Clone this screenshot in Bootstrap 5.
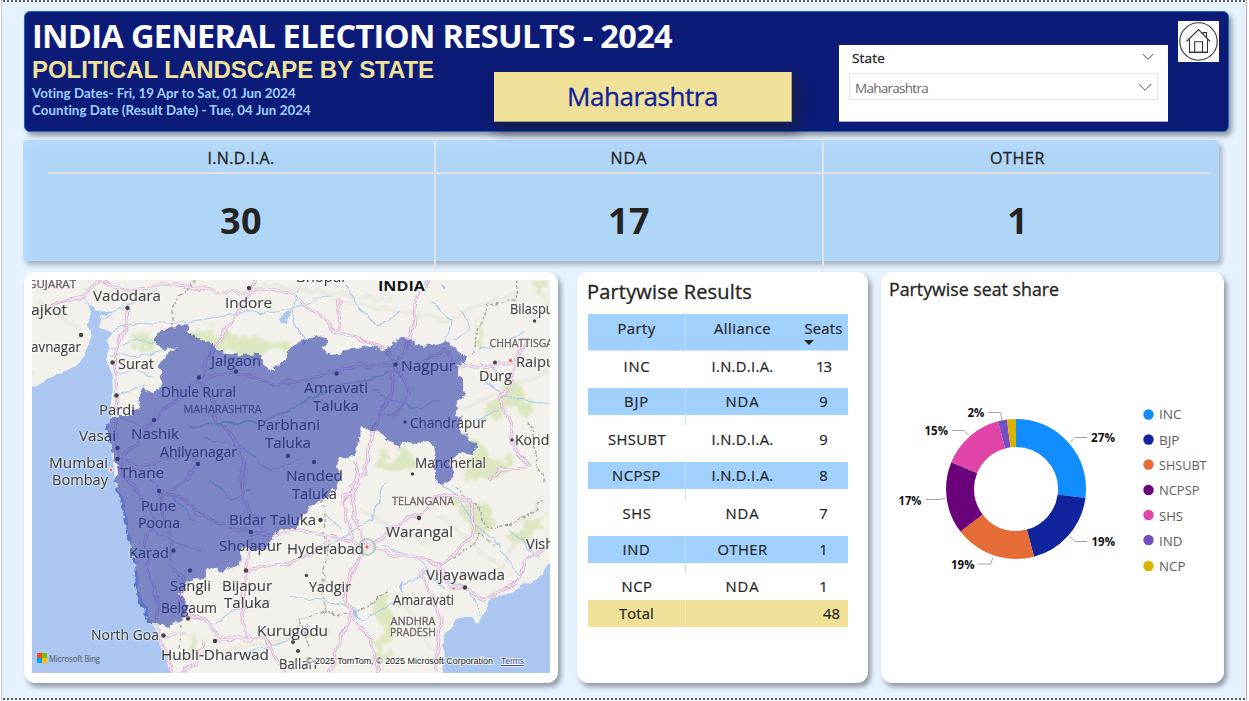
<!DOCTYPE html>
<html lang="en">
<head>
<meta charset="utf-8">
<meta name="viewport" content="width=device-width, initial-scale=1">
<title>India General Election Results - 2024</title>
<link href="https://cdn.jsdelivr.net/npm/bootstrap@5.3.0/dist/css/bootstrap.min.css" rel="stylesheet">
<style>
  body { width:1249px; height:701px; overflow:hidden; background:#fff; color:#252423; font-family:"Open Sans","Noto Sans",sans-serif; }
  .report { width:1246px; height:700px; margin-left:1px; padding:9px 0 0 22px; background:#e6f2ff; border-left:1px solid #ccc; border-right:1px solid #b5b5b5; }
  .dots { left:2px; width:1245px; height:2px; background:repeating-linear-gradient(90deg,#fff0 0 1px,#605e5c 1px 3px,#fff0 3px 4px); }
  .dots-end { top:698px; }
  [data-w] { white-space:nowrap; }
  .banner { width:1205px; height:121px; margin-top:2px; background:#0d1b78; border:1px solid #1767bd; border-radius:6px; box-shadow:3px 4px 5px #0000005c; }
  .headline { width:462px; padding-left:7px; padding-top:3px; }
  .headline h1 { font-size:32.5px; line-height:42px; font-weight:700; color:#fff; margin:0; }
  .headline h2 { font:700 24px/25px "Liberation Sans",Arial,sans-serif; color:#f0e199; margin:0; }
  .headline p { font:700 13.3px/17px Lato,sans-serif; color:#a0d1ff; margin:0; }
  .headline .first { padding-top:3px; }
  .state-name { width:298px; height:50px; margin:60px 0 0 7px; background:#f0e199; color:#12239e; font-size:26px; -webkit-text-stroke:.35px; box-shadow:3px 4px 12px 4px #15205890, 6px 7px 12px #22222270; border-right:1px solid #a9a27b; border-bottom:1px solid #a9a27b; padding-bottom:1px; }
  .slicer { width:329px; height:77px; margin:33px 0 0 47px; background:#fff; padding:0 10px; border-bottom:1px solid #aab; }
  .slicer .caption-row { height:28px; padding:0 3px; font-size:13.5px; -webkit-text-stroke:.3px; }
  .slicer .caption-row span { padding-bottom:2px; }
  .slicer .caption-row svg { margin:0 1px 4px 0; }
  .slicer .choice { height:27px; border:1px solid #e6e6e6; padding:3px 5px 0; font-size:13.5px; color:#666; width:309px; }
  .slicer .choice svg { margin-bottom:2px; }
  .home-link { width:41px; height:41px; margin:9px 0 0 10px; background:#fff; }
  .kpis { width:1196px; height:121px; margin:8px 0 0 -1px; padding-left:24px; border-radius:4px; background:#afd5f7; box-shadow:inset 5px 5px 8px #b9dcff, 3px 4px 5px #00000045; }
  .kpi { width:388px; height:128px; margin-top:1px; border-right:2px solid #e3e3e3; }
  .kpi:last-child { border-right:0; width:387px; }
  .kpi-first { width:389px; padding-left:1px; }
  .kpi-name { height:33px; border-bottom:2px solid #e3e3e3; font-size:16px; line-height:34px; -webkit-text-stroke:.3px; }
  .kpi-value { font-size:36px; line-height:48px; font-weight:700; margin-top:23px; }
  .panel { height:411px; background:#fff; border-radius:11px; box-shadow:3px 4px 5px #0000005c; }
  .lower { margin-top:11px; }
  .map-panel { width:534px; padding:8px; }
  .table-panel { width:291px; margin-left:19px; padding:6px 0 0 11px; }
  .share-panel { width:343px; margin-left:13px; padding:4px 0 0 8px; }
  .results { width:260px; table-layout:fixed; border-collapse:separate; border-spacing:0; font-size:14.8px; margin-top:9px; text-align:center; -webkit-text-stroke:.2px; }
  .results th, .results td { padding:0; vertical-align:top; font-weight:400; height:37px; line-height:28px; }
  .results th { background:#a0d1ff; line-height:29px; border-bottom:1px solid #cfe6fd; }
  .results .top-row td { line-height:30px; }
  .results th:first-child, .results .band td:first-child { border-right:1px solid #c3e0fc; }
  .results .band td { line-height:27px; background:linear-gradient(#a0d1ff 27px,#fff 27px); }
  .results .last td { height:27px; line-height:27px; }
  .results .sum td { height:27px; line-height:27px; background:#f0e199; }
  .results .sum td:first-child { border-right:1px solid #f5eab8; }
  .sort-arrow { display:block; width:0; border:5px solid transparent; border-top-color:#252423; border-bottom:0; margin:-3px 0 0 5px; }
  .panel h3 { font-weight:400; margin:0; -webkit-text-stroke:.3px; }
  .table-panel h3 { font-size:20px; line-height:27px; margin-left:-1px; }
  .share-panel h3 { font-size:17.8px; line-height:27px; }
  svg text { font-family:"Open Sans","Noto Sans",sans-serif; }
  .city { font-size:15.2px; fill:#404040; stroke:#404040; stroke-width:.15px; filter:drop-shadow(0 0 .7px #fff) drop-shadow(0 0 1px #fff); }
  .region { font-size:10.5px; fill:#6d6161; stroke:#6d6161; stroke-width:.3px; filter:drop-shadow(0 0 1px #fff); }
  .pct { font-size:12px; font-weight:700; fill:#111; }
  .key { font-size:12.5px; fill:#605e5c; }
</style>
</head>
<body class="position-relative">
<div class="dots position-absolute top-0"></div>
<main class="report">
  <header class="banner d-flex align-items-start">
    <div class="headline">
      <h1><span data-w="640">INDIA GENERAL ELECTION RESULTS - 2024</span></h1>
      <h2><span data-w="402">POLITICAL LANDSCAPE BY STATE</span></h2>
      <p class="first"><span data-w="264">Voting Dates- Fri, 19 Apr to Sat, 01 Jun 2024</span></p>
      <p><span data-w="279">Counting Date (Result Date) - Tue, 04 Jun 2024</span></p>
    </div>
    <div class="state-name d-flex align-items-center justify-content-center"><span data-w="151">Maharashtra</span></div>
    <div class="slicer">
      <div class="caption-row d-flex align-items-center justify-content-between"><span data-w="33">State</span>
        <svg width="12" height="8" fill="none" stroke="#444"><path d="M.7 1 6 6.3 11.3 1"/></svg></div>
      <div class="choice d-flex align-items-center justify-content-between"><span data-w="73">Maharashtra</span>
        <svg width="14" height="9" fill="none" stroke="#555"><path d="M.7 1 7 7.3 13.3 1"/></svg></div>
    </div>
    <a class="home-link" href="#" aria-label="Home"><svg class="d-block" width="41" height="41" fill="none" stroke="#333" stroke-width="1.1"><circle cx="20.5" cy="20.5" r="18.7"/><path d="M8.5 20.5 20.5 8.5 32.2 20.5M25.3 13V11.5H28.5V16.5M11.5 18.5V31.5H29.5V18.5M16.7 31V20.8H24.5V31"/><path d="M11.5 31.3H29.5" stroke-width="1.5"/></svg></a>
  </header>

  <section class="kpis d-flex">
    <div class="kpi kpi-first text-center"><div class="kpi-name"><span data-w="67">I.N.D.I.A.</span></div><div class="kpi-value"><span data-w="42">30</span></div></div>
    <div class="kpi text-center"><div class="kpi-name"><span data-w="37">NDA</span></div><div class="kpi-value"><span data-w="42">17</span></div></div>
    <div class="kpi text-center"><div class="kpi-name"><span data-w="55">OTHER</span></div><div class="kpi-value">1</div></div>
  </section>

  <section class="lower d-flex">
    <article class="panel map-panel">
      <svg class="d-block" width="518" height="393" viewBox="32 280 518 393">
        <defs>
          <filter id="rough" x="-5%" y="-5%" width="110%" height="110%"><feTurbulence type="fractalNoise" baseFrequency=".16" numOctaves="3" seed="4"/><feDisplacementMap in="SourceGraphic" scale="8" xChannelSelector="R" yChannelSelector="G"/></filter>
          <filter id="wobble" filterUnits="userSpaceOnUse" x="20" y="270" width="545" height="415"><feTurbulence type="fractalNoise" baseFrequency=".07" numOctaves="2" seed="9"/><feDisplacementMap in="SourceGraphic" scale="9" xChannelSelector="R" yChannelSelector="G"/></filter>
          <filter id="patchy" filterUnits="userSpaceOnUse" x="20" y="270" width="545" height="415"><feTurbulence type="fractalNoise" baseFrequency=".05" numOctaves="3" seed="3"/><feDisplacementMap in="SourceGraphic" scale="34" xChannelSelector="R" yChannelSelector="G"/><feGaussianBlur stdDeviation="1.2"/></filter>
          <g id="roads">
            <path d="M32 312 70 300 85 297 98 280M98 280 110 286 130 290 150 288 165 284 195 287 225 293 245 292 260 290 292 293 305 305 320 315 328 325 337 332 360 338 385 350 396 365M249 290 256 280M252 292 235 315 222 335 213 350 205 365 200 378 199 380 212 395 215 420 230 432 240 450 243 475 242 500 255 515 262 530"/>
            <path d="M127 307 128 325 118 345 115 363 117 395 116 420 117 448 121 472 135 490 148 505 152 520 145 545 150 575 157 600 157 622 165 650 172 673"/>
            <path d="M117 460 135 445 154 420 175 402 199 380 225 374 245 376 275 385 300 380 337 371 360 365 396 365 425 360 447 350 458 368 495 366 515 362 528 340M396 365 412 335 416 300 430 280M340 300 339 330M396 365 390 395 380 410 372 430 369 450 365 475 350 485 355 515 366 547 352 575 345 600 350 615 340 640 328 673"/>
            <path d="M396 365 405 385 410 395 395 415 375 418M515 362 510 385 500 398 510 425 515 450 530 465 500 470 490 480"/>
            <path d="M117 460 140 466 165 460 190 452 198 463 175 490 160 492 185 500 200 515 225 525 250 531 247 570 244 590 242 615 250 640 220 638 205 620 190 615 180 600 185 580 170 565 172 545 165 520 159 492"/>
            <path d="M250 531 275 535 300 530 330 535 345 540 366 547 395 555 420 557 440 565 448 586 470 590 485 600 500 590 518 583 525 560 549 545M366 547 385 535 405 520 425 510 435 500 445 495 470 500 475 530 460 550 440 565M425 570 420 575 432 595 440 620 438 650 435 673"/>
            <path d="M247 570 270 565 290 562 310 555 330 540M215 641 240 640 265 635 275 655 285 673M350 615 370 640 380 673M205 641 195 665 180 673M355 460 360 485 342 500 350 525 355 547M185 635 165 635"/>
          </g>
        </defs>
        <rect x="32" y="280" width="518" height="393" fill="#f3f1ec"/>
        <g fill="#d3e4b0" opacity=".7" filter="url(#patchy)">
          <path d="M190 326 240 337 285 343 285 355 230 354 200 340ZM135 335 155 334 155 342 140 342ZM480 318 485 345 475 348ZM505 385 530 393 540 405 520 410 505 422 488 413ZM538 282 549 282 549 310ZM375 459 395 453 420 462 405 472 388 467ZM450 500 470 497 495 517 488 530 465 522ZM505 535 525 518 545 512 542 535 515 545ZM380 592 393 588 396 610 386 640 381 665 375 665 378 630 372 610ZM185 635 195 637 195 648 188 645ZM475 443 500 460 515 473 488 480 460 472ZM34 364 39 368 38 373 34 373Z"/>
        </g>
        <g fill="none" stroke="#dedfd4" stroke-width="5" opacity=".35" filter="url(#wobble)"><path d="M330 300 450 320 520 290M460 410 549 370M200 655 330 630M360 510 430 545M440 515 500 570 540 500M38 300 80 330M260 285 390 300M400 590 430 650"/></g>
        <g fill="none" stroke="#b0cdef" stroke-width="1.2" filter="url(#wobble)">
          <path d="M98 320 135 300 160 290M103 335 130 325 148 322 190 322 235 313 280 312 330 295M110 350 135 340 155 342M112 375 135 370 155 376M118 395 145 385M163 350 150 355 110 356M345 285 360 310 380 325 400 310M430 300 450 320 445 345M460 310 470 330 455 340M480 350 505 345 525 330M305 345 290 310 300 290M480 380 520 400 549 405M465 425 500 410M435 480 460 500 476 525 500 545 515 570 520 580M290 595 320 600 345 605 365 620 375 612 395 603M400 588 425 575 445 580 470 590 480 615M325 515 340 530M480 360 500 375M380 545 420 560 445 590M215 625 225 615 270 600M310 625 290 640 240 655M385 480 370 520 330 545M540 560 510 530M120 420 150 430 180 440M140 520 170 540 200 550M210 480 230 500 250 490M370 390 420 410 440 400M205 440 240 445 270 470 300 460M150 480 175 500 195 520"/>
        </g>
        <g fill="none" stroke="#a3a39d" stroke-width="1.3" stroke-dasharray="3 2" filter="url(#wobble)"><path d="M196 280 180 295 172 310 172 328M518 280 515 300 490 304 480 325 472 355M455 487 475 505 487 527 515 525 545 500M323 500 325 535 330 545 323 570 323 612 300 620 310 650M323 612 352 615 390 590M440 565 470 550 480 535 495 545M530 420 535 460 545 480M180 625 178 650"/></g>
        <g fill="#abc7f1" filter="url(#wobble)">
          <path d="M20 390 50 380 73 367 86 354 91 339 88 322 92 312 84 297 90 305 97 311 115 309 100 316 99 328 114 331 104 342 109 350 104 360 111 371 113 388 111 403 108 430 112 453 116 480 120 493 125 513 131 540 136 563 138 590 145 608 154 627 162 647 176 690H20Z"/>
          <path d="M560 550 542 577 520 587 503 595 493 597 487 608 478 623 470 617 457 620 446 632 443 647 444 660 442 690H565Z"/>
          <path d="M279 317 289 310V323L283 322ZM440 284 448 287 446 290ZM398 587 404 581 402 593ZM347 610 364 617 352 616Z"/>
        </g>
        <g filter="url(#wobble)" fill="none" stroke-linejoin="round"><use href="#roads" stroke="#d8b4d6" stroke-width="3.2"/><use href="#roads" stroke="#f5ecf3" stroke-width="1.3"/></g>
        <circle cx="367" cy="547" r="8" fill="none" stroke="#8cc9bd" stroke-width="2" opacity=".7"/>
        <g fill="none" stroke="#80b9b3" stroke-width="2" opacity=".6" filter="url(#wobble)"><path d="M190 428 220 422 260 422 290 410 320 395 345 382 375 380 390 370"/></g>
        <g fill="#444">
          <circle cx="127.5" cy="308" r="2.2"/><circle cx="81" cy="335" r="2.2"/><circle cx="249" cy="288" r="2.2"/><circle cx="112.5" cy="362.5" r="2.2"/><circle cx="116.5" cy="395.5" r="2.2"/><circle cx="199" cy="377.5" r="2.2"/><circle cx="236" cy="371.5" r="2.2"/><circle cx="154" cy="420" r="2.2"/><circle cx="117.5" cy="448" r="2.2"/><circle cx="117.5" cy="459" r="2.2"/><circle cx="198" cy="464" r="2.2"/><circle cx="336.5" cy="373.5" r="2.2"/><circle cx="395.5" cy="364.5" r="2.2"/><circle cx="405" cy="422" r="1.7"/><circle cx="534.5" cy="321" r="1.7"/><circle cx="495" cy="362.5" r="2"/><circle cx="512" cy="440" r="1.7"/><circle cx="412.5" cy="474" r="1.7"/><circle cx="314" cy="462" r="2.2"/><circle cx="288" cy="456" r="2.2"/><circle cx="159" cy="491" r="2.2"/><circle cx="173.5" cy="550.5" r="2.2"/><circle cx="190" cy="570.5" r="2.2"/><circle cx="251" cy="532" r="2.2"/><circle cx="320.5" cy="520" r="2.2"/><circle cx="419" cy="518" r="2.2"/><circle cx="246" cy="570.5" r="2.2"/><circle cx="306.5" cy="575.5" r="1.7"/><circle cx="465" cy="587.5" r="2.2"/><circle cx="188" cy="618.5" r="2.2"/><circle cx="163.5" cy="635.5" r="2.2"/><circle cx="215" cy="641" r="2.2"/><circle cx="293" cy="642" r="2"/><circle cx="298" cy="651" r="2"/>
        </g>
        <g fill="#f0604d" stroke="#fff"><circle cx="111" cy="470" r="2"/><circle cx="510.5" cy="360.5" r="2.2"/><circle cx="367" cy="547" r="2.2"/><circle cx="453.5" cy="588.5" r="1.7"/></g>
        <g class="region">
          <text x="28" y="288" textLength="48">GUJARAT</text><text x="183.5" y="412.5" textLength="78">MAHARASHTRA</text><text x="489.5" y="346.5" textLength="70">CHHATTISGAR</text><text x="392" y="505" textLength="62">TELANGANA</text><text x="390.5" y="624.5" textLength="45">ANDHRA</text><text x="390" y="635.5" textLength="46">PRADESH</text>
        </g>
        <g class="city">
          <text x="93" y="301" textLength="68">Vadodara</text><text x="225" y="308" textLength="47">Indore</text><text x="31" y="315" textLength="36">ajkot</text><text x="31" y="352" textLength="50">avnagar</text><text x="118" y="368.5" textLength="36">Surat</text><text x="211" y="366" textLength="50">Jalgaon</text><text x="161" y="396.5" textLength="75">Dhule Rural</text><text x="99" y="415" textLength="36">Pardi</text><text x="79" y="441" textLength="37">Vasai</text><text x="131" y="439" textLength="48">Nashik</text><text x="160" y="457" textLength="77">Ahilyanagar</text><text x="49" y="468" textLength="59">Mumbai</text><text x="52" y="485" textLength="56">Bombay</text><text x="120" y="478" textLength="44">Thane</text>
          <text x="296" y="282" textLength="49">Bhopal</text><text x="510" y="314" textLength="49">Bilaspur</text><text x="401" y="370.5" textLength="54">Nagpur</text><text x="516" y="366.5" textLength="45">Raipur</text><text x="479" y="381" textLength="33">Durg</text><text x="304" y="393" textLength="64">Amravati</text><text x="313" y="411" textLength="46">Taluka</text><text x="257" y="430" textLength="63">Parbhani</text><text x="265" y="448" textLength="46">Taluka</text><text x="410" y="427.5" textLength="76">Chandrapur</text><text x="515" y="445" textLength="66">Kondagao</text><text x="415" y="468" textLength="71">Mancherial</text><text x="286" y="481" textLength="57">Nanded</text><text x="292" y="499" textLength="45">Taluka</text>
          <text x="141" y="510.5" textLength="35">Pune</text><text x="138" y="528" textLength="42">Poona</text><text x="229" y="525" textLength="87">Bidar Taluka</text><text x="129" y="557.5" textLength="40">Karad</text><text x="219" y="550.5" textLength="63">Sholapur</text><text x="287" y="553.5" textLength="77">Hyderabad</text><text x="386" y="537" textLength="67">Warangal</text><text x="526" y="548.5" textLength="78">Vishakhapa</text><text x="170" y="590.5" textLength="41">Sangli</text><text x="222" y="590.5" textLength="50">Bijapur</text><text x="224" y="608" textLength="46">Taluka</text><text x="309" y="591.5" textLength="42">Yadgir</text><text x="426" y="579.5" textLength="79">Vijayawada</text><text x="393" y="604.5" textLength="61">Amaravati</text><text x="161" y="612.5" textLength="56">Belgaum</text><text x="91" y="640" textLength="68">North Goa</text><text x="257" y="635.5" textLength="71">Kurugodu</text><text x="161" y="660" textLength="108">Hubli-Dharwad</text><text x="279" y="669" textLength="38">Ballari</text>
        </g>
        <text x="378" y="291" textLength="47" font-size="15" font-weight="700" fill="#111" stroke="#fff" stroke-width="2" paint-order="stroke">INDIA</text>
        <path filter="url(#rough)" fill="#2a39a8" fill-opacity=".58" d="M156 332 165 329 177 327 185 323 188 325 188 333 197 338 212 343 217 350 227 354 260 355 265 365 267 369 278 367 282 362 287 358 290 348 303 340 318 336 327 340 328 347 322 347 327 354 340 353 352 348 367 345 380 350 390 348 393 342 403 338 413 340 415 345 433 346 443 343 453 343 458 352 467 357 465 362 458 363 458 373 463 380 464 397 457 402 456 413 462 418 458 430 472 440 477 445 473 454 460 452 450 462 452 470 450 481 442 485 435 477 435 457 433 445 427 441 413 444 403 442 400 446 390 442 380 433 362 427 360 433 358 443 353 457 340 458 337 468 342 477 336 488 323 500 312 505 307 513 297 521 297 530 277 530 270 543 258 552 241 545 240 563 223 572 208 567 205 577 187 582 180 595 188 603 185 617 170 627 157 623 150 623 142 608 136 590 134 563 129 540 123 513 118 493 115 480 118 470 112 453 107 430 108 417 128 417 138 407 140 387 153 393 162 385 160 373 157 367 163 358 179 347 163 349 156 342Z"/>
        <g><path fill="#f25022" d="M37 653h5v5h-5z"/><path fill="#7fba00" d="M42 653h5v5h-5z"/><path fill="#00a4ef" d="M37 658h5v5h-5z"/><path fill="#ffb900" d="M42 658h5v5h-5z"/><text x="49" y="661.5" textLength="51" font-size="8.5" fill="#66707f" stroke="#66707f" stroke-width=".2">Microsoft Bing</text></g>
        <g font-size="9" fill="#111" stroke="#fff" stroke-width="1.5" paint-order="stroke"><text x="306" y="664" textLength="187" style="font-family:'Liberation Sans',sans-serif">© 2025 TomTom, © 2025 Microsoft Corporation</text><text x="501" y="664" textLength="23" fill="#27408f" text-decoration="underline" style="font-family:'Liberation Sans',sans-serif">Terms</text></g>
      </svg>
    </article>

    <article class="panel table-panel">
      <h3><span data-w="165">Partywise Results</span></h3>
      <table class="results">
        <colgroup><col style="width:98px"><col style="width:113px"><col style="width:49px"></colgroup>
        <thead><tr><th><span data-w="38">Party</span></th><th><span data-w="57">Alliance</span></th><th><span data-w="38">Seats</span><i class="sort-arrow"></i></th></tr></thead>
        <tbody>
          <tr class="top-row"><td><span data-w="27">INC</span></td><td><span data-w="62">I.N.D.I.A.</span></td><td><span data-w="15">13</span></td></tr>
          <tr class="band"><td><span data-w="25">BJP</span></td><td><span data-w="34">NDA</span></td><td>9</td></tr>
          <tr><td><span data-w="58">SHSUBT</span></td><td><span data-w="62">I.N.D.I.A.</span></td><td>9</td></tr>
          <tr class="band"><td><span data-w="49">NCPSP</span></td><td><span data-w="62">I.N.D.I.A.</span></td><td>8</td></tr>
          <tr><td><span data-w="29">SHS</span></td><td><span data-w="34">NDA</span></td><td>7</td></tr>
          <tr class="band"><td><span data-w="28">IND</span></td><td><span data-w="50">OTHER</span></td><td>1</td></tr>
          <tr class="last"><td><span data-w="31">NCP</span></td><td><span data-w="34">NDA</span></td><td>1</td></tr>
          <tr class="sum"><td><span data-w="35">Total</span></td><td></td><td class="text-end"><span class="pe-1 me-1">48</span></td></tr>
        </tbody>
      </table>
    </article>

    <article class="panel share-panel">
      <h3><span data-w="170">Partywise seat share</span></h3>
      <svg class="d-block" width="330" height="340" viewBox="889 303 330 340">
        <g fill="none" stroke-width="28" transform="rotate(-90 1016 489)">
          <circle cx="1016" cy="489" r="56" pathLength="48" stroke="#118dff" stroke-dasharray="13 35"/>
          <circle cx="1016" cy="489" r="56" pathLength="48" stroke="#12239e" stroke-dasharray="9 39" stroke-dashoffset="-13"/>
          <circle cx="1016" cy="489" r="56" pathLength="48" stroke="#e66c37" stroke-dasharray="9 39" stroke-dashoffset="-22"/>
          <circle cx="1016" cy="489" r="56" pathLength="48" stroke="#6b007b" stroke-dasharray="8 40" stroke-dashoffset="-31"/>
          <circle cx="1016" cy="489" r="56" pathLength="48" stroke="#e044a7" stroke-dasharray="7 41" stroke-dashoffset="-39"/>
          <circle cx="1016" cy="489" r="56" pathLength="48" stroke="#744ec2" stroke-dasharray="1 47" stroke-dashoffset="-46"/>
          <circle cx="1016" cy="489" r="56" pathLength="48" stroke="#d9b300" stroke-dasharray="1 47" stroke-dashoffset="-47"/>
        </g>
        <path fill="none" stroke="#a6a6a6" d="M1070 442.5 1075 437.5H1087M1070 536.5 1075 541.5H1087M993 557.5 990.5 564H978M945 498.5 938 499.5H926M969 435.5 964 430.5H952M1002 420 1000.5 412.5H988"/>
        <g class="pct"><text x="1091" y="442" textLength="24">27%</text><text x="1091.5" y="546" textLength="23.5">19%</text><text x="951" y="569" textLength="23.5">19%</text><text x="898.5" y="505" textLength="23">17%</text><text x="924.5" y="435" textLength="23.5">15%</text><text x="967.5" y="417" textLength="17">2%</text></g>
        <circle cx="1148.5" cy="414.5" r="5.2" fill="#118dff"/><circle cx="1148.5" cy="439.5" r="5.2" fill="#12239e"/><circle cx="1148.5" cy="464.5" r="5.2" fill="#e66c37"/><circle cx="1148.5" cy="490" r="5.2" fill="#6b007b"/><circle cx="1148.5" cy="515" r="5.2" fill="#e044a7"/><circle cx="1148.5" cy="540" r="5.2" fill="#744ec2"/><circle cx="1148.5" cy="566" r="5.2" fill="#d9b300"/>
        <g class="key"><text x="1159" y="419" textLength="22.5">INC</text><text x="1159" y="444.5" textLength="20.5">BJP</text><text x="1159" y="470" textLength="47.5">SHSUBT</text><text x="1159" y="495" textLength="40.5">NCPSP</text><text x="1159" y="520.5" textLength="24">SHS</text><text x="1159" y="546" textLength="23.5">IND</text><text x="1159" y="571" textLength="26.5">NCP</text></g>
      </svg>
    </article>
  </section>
</main>
<div class="dots dots-end position-absolute"></div>
<script src="https://cdn.jsdelivr.net/npm/bootstrap@5.3.0/dist/js/bootstrap.bundle.min.js"></script>
<script>
  // Track each label to the width given in data-w; SVG labels scale their glyphs to textLength.
  document.querySelectorAll('[data-w]').forEach(function (el) {
    el.style.letterSpacing = (el.dataset.w - el.getBoundingClientRect().width) / el.textContent.length + 'px';
  });
  document.querySelectorAll('svg text').forEach(function (t) { t.setAttribute('lengthAdjust', 'spacingAndGlyphs'); });
</script>
</body>
</html>
